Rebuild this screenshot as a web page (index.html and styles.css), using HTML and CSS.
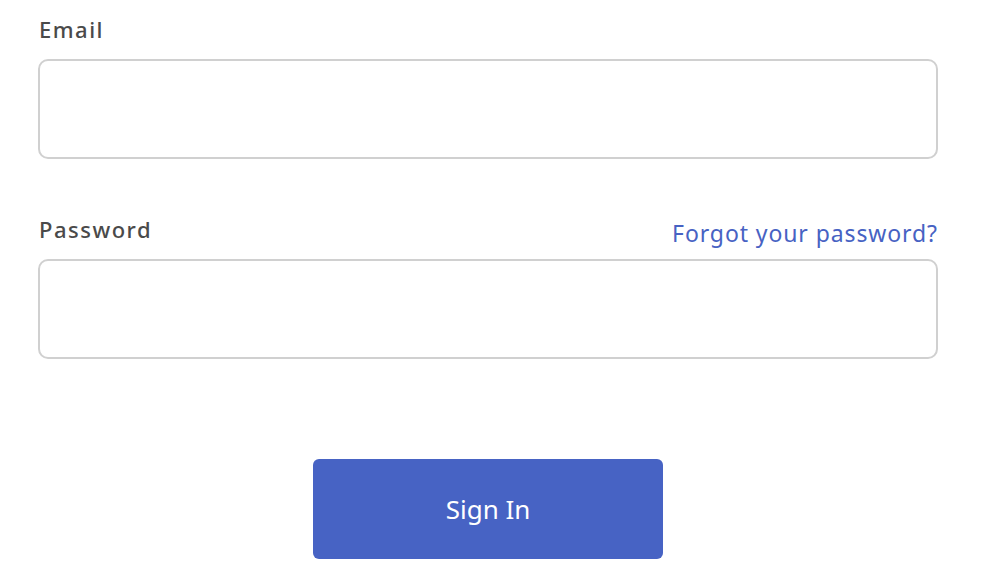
FILE: index.html
```html
<!DOCTYPE html>
<html lang="en">
  <head>
    <meta charset="UTF-8" />
    <meta name="viewport" content="width=device-width, initial-scale=1.0" />
    <title>Sign In</title>
    <link rel="stylesheet" href="styles.css">
  </head>
  <body>
    <form class="signin-form">
      <div class="field">
        <div class="field-head">
          <label for="email">Email</label>
        </div>
        <input id="email" type="email" />
      </div>

      <div class="field">
        <div class="field-head">
          <label for="password">Password</label>
          <a href="#" class="forgot-link">Forgot your password?</a>
        </div>
        <input id="password" type="password" />
      </div>

      <div class="button-row">
        <button type="submit" class="signin-button">Sign In</button>
      </div>
    </form>
  </body>
</html>
```

FILE: styles.css
```css
body {
  margin: 0;
  background-color: #fff;
  font-family: "Noto Sans", "Liberation Sans", sans-serif;
}
.signin-form {
  width: 900px;
  margin-left: 38px;
  padding-top: 14px;
}
.field {
  margin-bottom: 55px;
}
.field-head {
  display: flex;
  justify-content: space-between;
  align-items: flex-end;
  height: 30px;
  margin-bottom: 15px;
  line-height: 30px;
}
.field-head label {
  font-size: 22px;
  font-weight: 500;
  letter-spacing: 1.5px;
  color: #4a4a4a;
  padding-left: 1px;
}
.forgot-link {
  font-size: 23px;
  letter-spacing: 0.9px;
  color: #4762c3;
  text-decoration: none;
  margin-bottom: -4px;
}
input {
  display: block;
  box-sizing: border-box;
  width: 100%;
  height: 100px;
  border: 2px solid #d0d0d0;
  border-radius: 10px;
  background: #fff;
  font-size: 22px;
  padding: 0 16px;
}
.button-row {
  display: flex;
  justify-content: center;
  padding-top: 45px;
}
.signin-button {
  width: 350px;
  height: 100px;
  border: none;
  border-radius: 6px;
  background-color: #4763c4;
  color: #fff;
  font-family: inherit;
  font-size: 26px;
  cursor: pointer;
}
```
